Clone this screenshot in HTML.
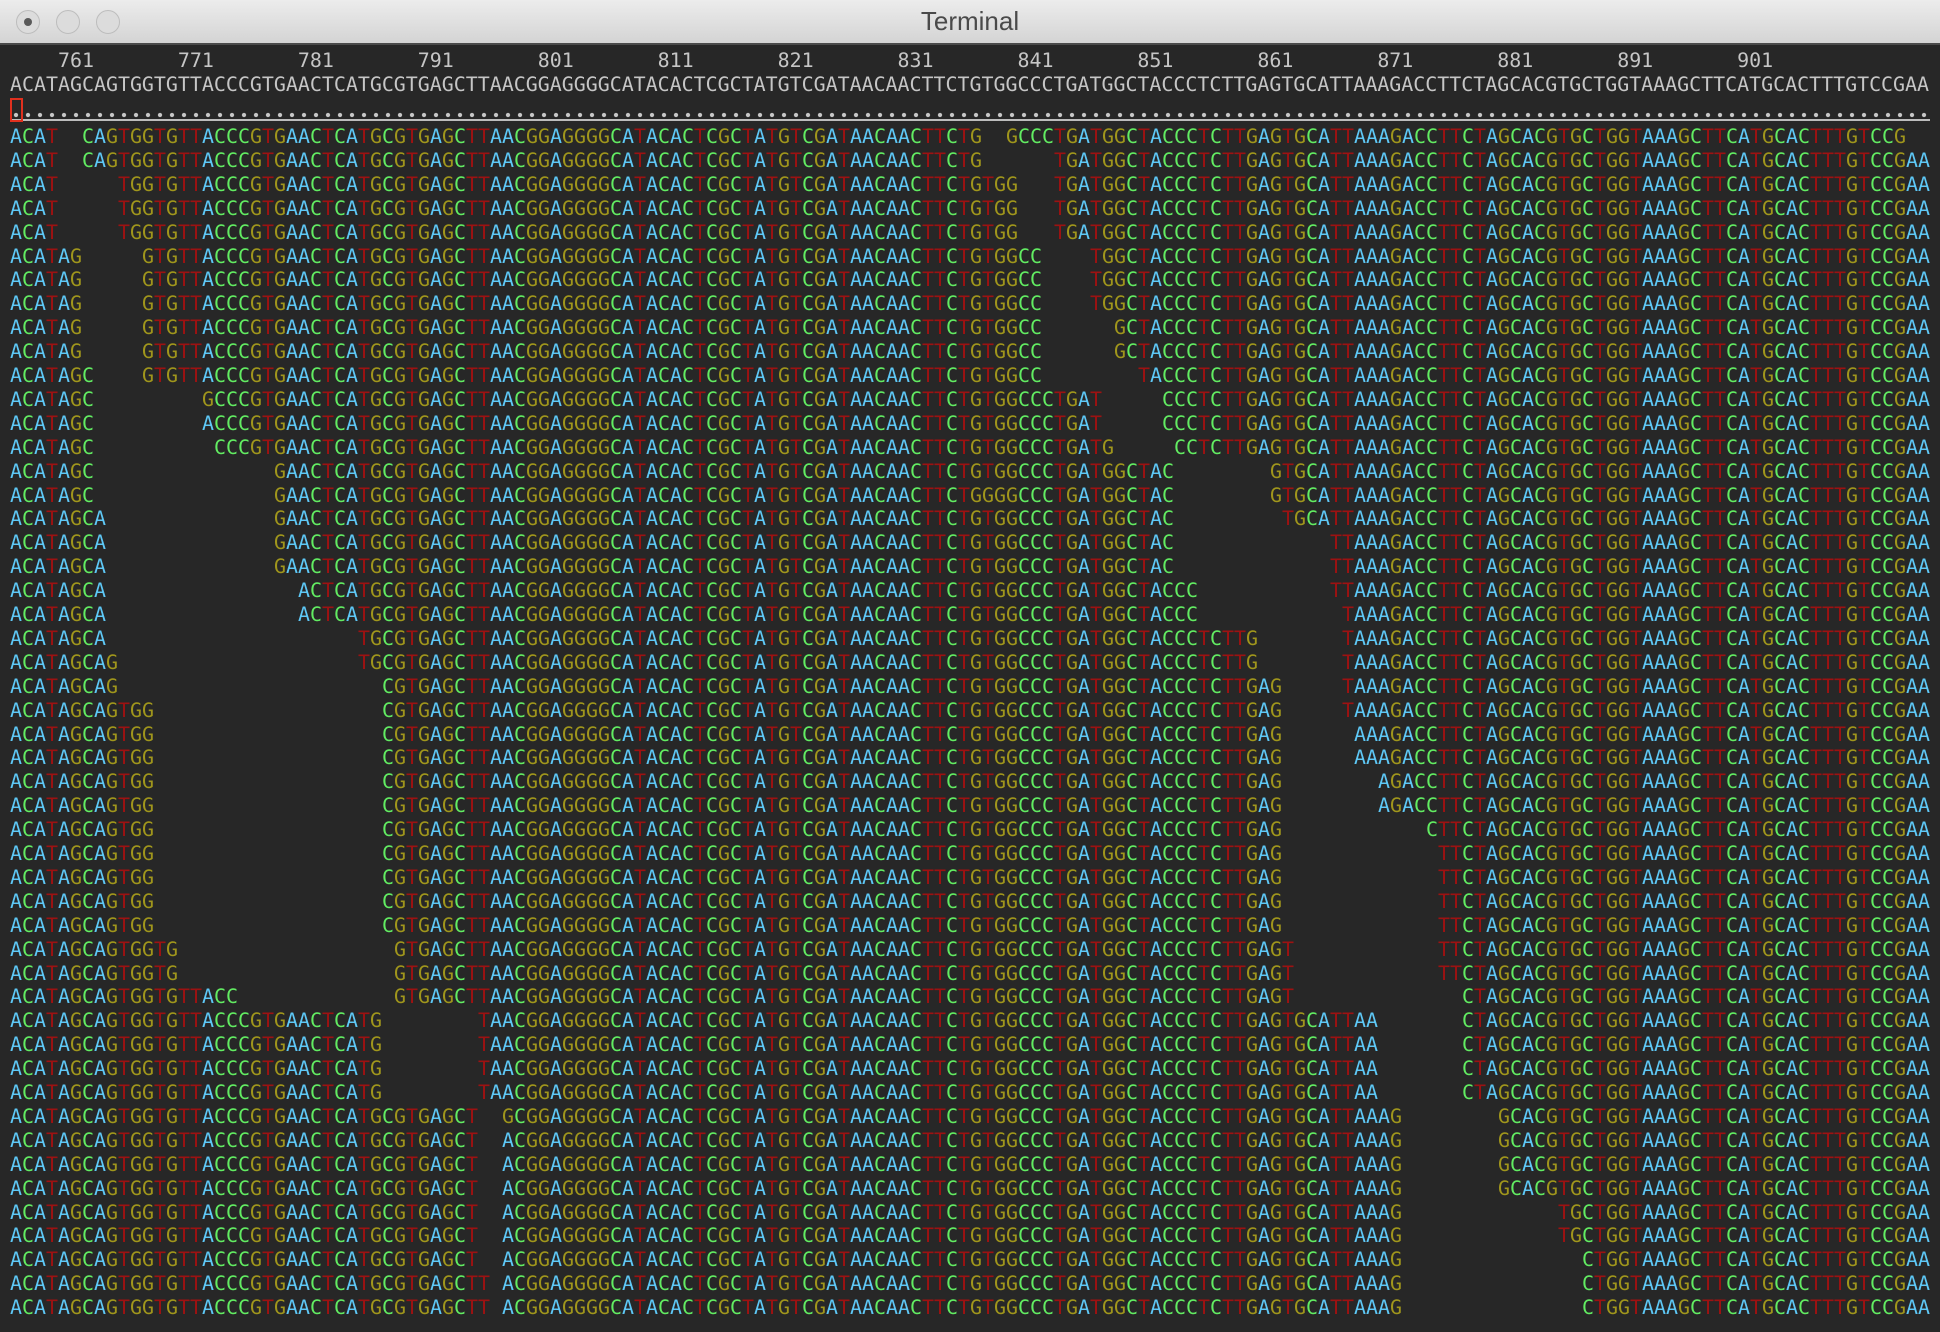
<!DOCTYPE html>
<html><head><meta charset="utf-8">
<style>
html,body{margin:0;padding:0;}
body{width:1940px;height:1332px;background:#272727;overflow:hidden;position:relative;font-family:"DejaVu Sans Mono","Liberation Mono",monospace;}
#bar{position:absolute;left:0;top:0;width:1940px;height:43px;background:linear-gradient(#ececec,#d4d4d4);border-bottom:2px solid #4a4a4a;}
#bar .t{position:absolute;left:0;width:1940px;top:6px;text-align:center;font-family:"Liberation Sans",sans-serif;font-size:26px;color:#4a4a4a;}
.dot{position:absolute;top:10px;width:22px;height:22px;border-radius:50%;background:#dcdcdc;border:1px solid #bdbdbd;}
.dot i{position:absolute;left:7px;top:7px;width:8px;height:8px;border-radius:50%;background:#5a5a5a;}
.ln{position:absolute;left:0;height:24px;line-height:24px;font-size:19.93px;white-space:pre;}
.hd{color:#c6c6c6;left:10px;}
#dots{position:absolute;left:10px;top:112px;width:1920px;height:6px;background:radial-gradient(circle at 6px 3px,#c8c8c8 0,#c8c8c8 1.8px,transparent 2.4px);background-size:12px 6px;}
#sep{position:absolute;left:10px;top:119px;width:1920px;height:2px;background:#bdbdbd;}
#cur{position:absolute;left:10px;top:98px;width:9px;height:20px;border:2px solid #e0301e;}
.A{color:#5ec8f6}.C{color:#62ec62}.G{color:#a0961c}.T{color:#9c1212}
</style></head><body>
<div id="bar"><div class="dot" style="left:16px"><i></i></div><div class="dot" style="left:56px"></div><div class="dot" style="left:96px"></div><div class="t">Terminal</div></div>
<div class="ln hd" style="top:49px">    761       771       781       791       801       811       821       831       841       851       861       871       881       891       901</div>
<div class="ln hd" style="top:73px">ACATAGCAGTGGTGTTACCCGTGAACTCATGCGTGAGCTTAACGGAGGGGCATACACTCGCTATGTCGATAACAACTTCTGTGGCCCTGATGGCTACCCTCTTGAGTGCATTAAAGACCTTCTAGCACGTGCTGGTAAAGCTTCATGCACTTTGTCCGAA</div>
<div id="dots"></div>
<div id="sep"></div><div id="cur"></div>
<div id="rows">
<div class="r"><b c="0">ACAT</b><b c="6">CAGTGGTGTTACCCGTGAACTCATGCGTGAGCTTAACGGAGGGGCATACACTCGCTATGTCGATAACAACTTCTG</b><b c="83">GCCCTGATGGCTACCCTCTTGAGTGCATTAAAGACCTTCTAGCACGTGCTGGTAAAGCTTCATGCACTTTGTCCG</b></div>
<div class="r"><b c="0">ACAT</b><b c="6">CAGTGGTGTTACCCGTGAACTCATGCGTGAGCTTAACGGAGGGGCATACACTCGCTATGTCGATAACAACTTCTG</b><b c="87">TGATGGCTACCCTCTTGAGTGCATTAAAGACCTTCTAGCACGTGCTGGTAAAGCTTCATGCACTTTGTCCGAA</b></div>
<div class="r"><b c="0">ACAT</b><b c="9">TGGTGTTACCCGTGAACTCATGCGTGAGCTTAACGGAGGGGCATACACTCGCTATGTCGATAACAACTTCTGTGG</b><b c="87">TGATGGCTACCCTCTTGAGTGCATTAAAGACCTTCTAGCACGTGCTGGTAAAGCTTCATGCACTTTGTCCGAA</b></div>
<div class="r"><b c="0">ACAT</b><b c="9">TGGTGTTACCCGTGAACTCATGCGTGAGCTTAACGGAGGGGCATACACTCGCTATGTCGATAACAACTTCTGTGG</b><b c="87">TGATGGCTACCCTCTTGAGTGCATTAAAGACCTTCTAGCACGTGCTGGTAAAGCTTCATGCACTTTGTCCGAA</b></div>
<div class="r"><b c="0">ACAT</b><b c="9">TGGTGTTACCCGTGAACTCATGCGTGAGCTTAACGGAGGGGCATACACTCGCTATGTCGATAACAACTTCTGTGG</b><b c="87">TGATGGCTACCCTCTTGAGTGCATTAAAGACCTTCTAGCACGTGCTGGTAAAGCTTCATGCACTTTGTCCGAA</b></div>
<div class="r"><b c="0">ACATAG</b><b c="11">GTGTTACCCGTGAACTCATGCGTGAGCTTAACGGAGGGGCATACACTCGCTATGTCGATAACAACTTCTGTGGCC</b><b c="90">TGGCTACCCTCTTGAGTGCATTAAAGACCTTCTAGCACGTGCTGGTAAAGCTTCATGCACTTTGTCCGAA</b></div>
<div class="r"><b c="0">ACATAG</b><b c="11">GTGTTACCCGTGAACTCATGCGTGAGCTTAACGGAGGGGCATACACTCGCTATGTCGATAACAACTTCTGTGGCC</b><b c="90">TGGCTACCCTCTTGAGTGCATTAAAGACCTTCTAGCACGTGCTGGTAAAGCTTCATGCACTTTGTCCGAA</b></div>
<div class="r"><b c="0">ACATAG</b><b c="11">GTGTTACCCGTGAACTCATGCGTGAGCTTAACGGAGGGGCATACACTCGCTATGTCGATAACAACTTCTGTGGCC</b><b c="90">TGGCTACCCTCTTGAGTGCATTAAAGACCTTCTAGCACGTGCTGGTAAAGCTTCATGCACTTTGTCCGAA</b></div>
<div class="r"><b c="0">ACATAG</b><b c="11">GTGTTACCCGTGAACTCATGCGTGAGCTTAACGGAGGGGCATACACTCGCTATGTCGATAACAACTTCTGTGGCC</b><b c="92">GCTACCCTCTTGAGTGCATTAAAGACCTTCTAGCACGTGCTGGTAAAGCTTCATGCACTTTGTCCGAA</b></div>
<div class="r"><b c="0">ACATAG</b><b c="11">GTGTTACCCGTGAACTCATGCGTGAGCTTAACGGAGGGGCATACACTCGCTATGTCGATAACAACTTCTGTGGCC</b><b c="92">GCTACCCTCTTGAGTGCATTAAAGACCTTCTAGCACGTGCTGGTAAAGCTTCATGCACTTTGTCCGAA</b></div>
<div class="r"><b c="0">ACATAGC</b><b c="11">GTGTTACCCGTGAACTCATGCGTGAGCTTAACGGAGGGGCATACACTCGCTATGTCGATAACAACTTCTGTGGCC</b><b c="94">TACCCTCTTGAGTGCATTAAAGACCTTCTAGCACGTGCTGGTAAAGCTTCATGCACTTTGTCCGAA</b></div>
<div class="r"><b c="0">ACATAGC</b><b c="16">GCCCGTGAACTCATGCGTGAGCTTAACGGAGGGGCATACACTCGCTATGTCGATAACAACTTCTGTGGCCCTGAT</b><b c="96">CCCTCTTGAGTGCATTAAAGACCTTCTAGCACGTGCTGGTAAAGCTTCATGCACTTTGTCCGAA</b></div>
<div class="r"><b c="0">ACATAGC</b><b c="16">ACCCGTGAACTCATGCGTGAGCTTAACGGAGGGGCATACACTCGCTATGTCGATAACAACTTCTGTGGCCCTGAT</b><b c="96">CCCTCTTGAGTGCATTAAAGACCTTCTAGCACGTGCTGGTAAAGCTTCATGCACTTTGTCCGAA</b></div>
<div class="r"><b c="0">ACATAGC</b><b c="17">CCCGTGAACTCATGCGTGAGCTTAACGGAGGGGCATACACTCGCTATGTCGATAACAACTTCTGTGGCCCTGATG</b><b c="97">CCTCTTGAGTGCATTAAAGACCTTCTAGCACGTGCTGGTAAAGCTTCATGCACTTTGTCCGAA</b></div>
<div class="r"><b c="0">ACATAGC</b><b c="22">GAACTCATGCGTGAGCTTAACGGAGGGGCATACACTCGCTATGTCGATAACAACTTCTGTGGCCCTGATGGCTAC</b><b c="105">GTGCATTAAAGACCTTCTAGCACGTGCTGGTAAAGCTTCATGCACTTTGTCCGAA</b></div>
<div class="r"><b c="0">ACATAGC</b><b c="22">GAACTCATGCGTGAGCTTAACGGAGGGGCATACACTCGCTATGTCGATAACAACTTCTGGGGCCCTGATGGCTAC</b><b c="105">GTGCATTAAAGACCTTCTAGCACGTGCTGGTAAAGCTTCATGCACTTTGTCCGAA</b></div>
<div class="r"><b c="0">ACATAGCA</b><b c="22">GAACTCATGCGTGAGCTTAACGGAGGGGCATACACTCGCTATGTCGATAACAACTTCTGTGGCCCTGATGGCTAC</b><b c="106">TGCATTAAAGACCTTCTAGCACGTGCTGGTAAAGCTTCATGCACTTTGTCCGAA</b></div>
<div class="r"><b c="0">ACATAGCA</b><b c="22">GAACTCATGCGTGAGCTTAACGGAGGGGCATACACTCGCTATGTCGATAACAACTTCTGTGGCCCTGATGGCTAC</b><b c="110">TTAAAGACCTTCTAGCACGTGCTGGTAAAGCTTCATGCACTTTGTCCGAA</b></div>
<div class="r"><b c="0">ACATAGCA</b><b c="22">GAACTCATGCGTGAGCTTAACGGAGGGGCATACACTCGCTATGTCGATAACAACTTCTGTGGCCCTGATGGCTAC</b><b c="110">TTAAAGACCTTCTAGCACGTGCTGGTAAAGCTTCATGCACTTTGTCCGAA</b></div>
<div class="r"><b c="0">ACATAGCA</b><b c="24">ACTCATGCGTGAGCTTAACGGAGGGGCATACACTCGCTATGTCGATAACAACTTCTGTGGCCCTGATGGCTACCC</b><b c="110">TTAAAGACCTTCTAGCACGTGCTGGTAAAGCTTCATGCACTTTGTCCGAA</b></div>
<div class="r"><b c="0">ACATAGCA</b><b c="24">ACTCATGCGTGAGCTTAACGGAGGGGCATACACTCGCTATGTCGATAACAACTTCTGTGGCCCTGATGGCTACCC</b><b c="111">TAAAGACCTTCTAGCACGTGCTGGTAAAGCTTCATGCACTTTGTCCGAA</b></div>
<div class="r"><b c="0">ACATAGCA</b><b c="29">TGCGTGAGCTTAACGGAGGGGCATACACTCGCTATGTCGATAACAACTTCTGTGGCCCTGATGGCTACCCTCTTG</b><b c="111">TAAAGACCTTCTAGCACGTGCTGGTAAAGCTTCATGCACTTTGTCCGAA</b></div>
<div class="r"><b c="0">ACATAGCAG</b><b c="29">TGCGTGAGCTTAACGGAGGGGCATACACTCGCTATGTCGATAACAACTTCTGTGGCCCTGATGGCTACCCTCTTG</b><b c="111">TAAAGACCTTCTAGCACGTGCTGGTAAAGCTTCATGCACTTTGTCCGAA</b></div>
<div class="r"><b c="0">ACATAGCAG</b><b c="31">CGTGAGCTTAACGGAGGGGCATACACTCGCTATGTCGATAACAACTTCTGTGGCCCTGATGGCTACCCTCTTGAG</b><b c="111">TAAAGACCTTCTAGCACGTGCTGGTAAAGCTTCATGCACTTTGTCCGAA</b></div>
<div class="r"><b c="0">ACATAGCAGTGG</b><b c="31">CGTGAGCTTAACGGAGGGGCATACACTCGCTATGTCGATAACAACTTCTGTGGCCCTGATGGCTACCCTCTTGAG</b><b c="111">TAAAGACCTTCTAGCACGTGCTGGTAAAGCTTCATGCACTTTGTCCGAA</b></div>
<div class="r"><b c="0">ACATAGCAGTGG</b><b c="31">CGTGAGCTTAACGGAGGGGCATACACTCGCTATGTCGATAACAACTTCTGTGGCCCTGATGGCTACCCTCTTGAG</b><b c="112">AAAGACCTTCTAGCACGTGCTGGTAAAGCTTCATGCACTTTGTCCGAA</b></div>
<div class="r"><b c="0">ACATAGCAGTGG</b><b c="31">CGTGAGCTTAACGGAGGGGCATACACTCGCTATGTCGATAACAACTTCTGTGGCCCTGATGGCTACCCTCTTGAG</b><b c="112">AAAGACCTTCTAGCACGTGCTGGTAAAGCTTCATGCACTTTGTCCGAA</b></div>
<div class="r"><b c="0">ACATAGCAGTGG</b><b c="31">CGTGAGCTTAACGGAGGGGCATACACTCGCTATGTCGATAACAACTTCTGTGGCCCTGATGGCTACCCTCTTGAG</b><b c="114">AGACCTTCTAGCACGTGCTGGTAAAGCTTCATGCACTTTGTCCGAA</b></div>
<div class="r"><b c="0">ACATAGCAGTGG</b><b c="31">CGTGAGCTTAACGGAGGGGCATACACTCGCTATGTCGATAACAACTTCTGTGGCCCTGATGGCTACCCTCTTGAG</b><b c="114">AGACCTTCTAGCACGTGCTGGTAAAGCTTCATGCACTTTGTCCGAA</b></div>
<div class="r"><b c="0">ACATAGCAGTGG</b><b c="31">CGTGAGCTTAACGGAGGGGCATACACTCGCTATGTCGATAACAACTTCTGTGGCCCTGATGGCTACCCTCTTGAG</b><b c="118">CTTCTAGCACGTGCTGGTAAAGCTTCATGCACTTTGTCCGAA</b></div>
<div class="r"><b c="0">ACATAGCAGTGG</b><b c="31">CGTGAGCTTAACGGAGGGGCATACACTCGCTATGTCGATAACAACTTCTGTGGCCCTGATGGCTACCCTCTTGAG</b><b c="119">TTCTAGCACGTGCTGGTAAAGCTTCATGCACTTTGTCCGAA</b></div>
<div class="r"><b c="0">ACATAGCAGTGG</b><b c="31">CGTGAGCTTAACGGAGGGGCATACACTCGCTATGTCGATAACAACTTCTGTGGCCCTGATGGCTACCCTCTTGAG</b><b c="119">TTCTAGCACGTGCTGGTAAAGCTTCATGCACTTTGTCCGAA</b></div>
<div class="r"><b c="0">ACATAGCAGTGG</b><b c="31">CGTGAGCTTAACGGAGGGGCATACACTCGCTATGTCGATAACAACTTCTGTGGCCCTGATGGCTACCCTCTTGAG</b><b c="119">TTCTAGCACGTGCTGGTAAAGCTTCATGCACTTTGTCCGAA</b></div>
<div class="r"><b c="0">ACATAGCAGTGG</b><b c="31">CGTGAGCTTAACGGAGGGGCATACACTCGCTATGTCGATAACAACTTCTGTGGCCCTGATGGCTACCCTCTTGAG</b><b c="119">TTCTAGCACGTGCTGGTAAAGCTTCATGCACTTTGTCCGAA</b></div>
<div class="r"><b c="0">ACATAGCAGTGGTG</b><b c="32">GTGAGCTTAACGGAGGGGCATACACTCGCTATGTCGATAACAACTTCTGTGGCCCTGATGGCTACCCTCTTGAGT</b><b c="119">TTCTAGCACGTGCTGGTAAAGCTTCATGCACTTTGTCCGAA</b></div>
<div class="r"><b c="0">ACATAGCAGTGGTG</b><b c="32">GTGAGCTTAACGGAGGGGCATACACTCGCTATGTCGATAACAACTTCTGTGGCCCTGATGGCTACCCTCTTGAGT</b><b c="119">TTCTAGCACGTGCTGGTAAAGCTTCATGCACTTTGTCCGAA</b></div>
<div class="r"><b c="0">ACATAGCAGTGGTGTTACC</b><b c="32">GTGAGCTTAACGGAGGGGCATACACTCGCTATGTCGATAACAACTTCTGTGGCCCTGATGGCTACCCTCTTGAGT</b><b c="121">CTAGCACGTGCTGGTAAAGCTTCATGCACTTTGTCCGAA</b></div>
<div class="r"><b c="0">ACATAGCAGTGGTGTTACCCGTGAACTCATG</b><b c="39">TAACGGAGGGGCATACACTCGCTATGTCGATAACAACTTCTGTGGCCCTGATGGCTACCCTCTTGAGTGCATTAA</b><b c="121">CTAGCACGTGCTGGTAAAGCTTCATGCACTTTGTCCGAA</b></div>
<div class="r"><b c="0">ACATAGCAGTGGTGTTACCCGTGAACTCATG</b><b c="39">TAACGGAGGGGCATACACTCGCTATGTCGATAACAACTTCTGTGGCCCTGATGGCTACCCTCTTGAGTGCATTAA</b><b c="121">CTAGCACGTGCTGGTAAAGCTTCATGCACTTTGTCCGAA</b></div>
<div class="r"><b c="0">ACATAGCAGTGGTGTTACCCGTGAACTCATG</b><b c="39">TAACGGAGGGGCATACACTCGCTATGTCGATAACAACTTCTGTGGCCCTGATGGCTACCCTCTTGAGTGCATTAA</b><b c="121">CTAGCACGTGCTGGTAAAGCTTCATGCACTTTGTCCGAA</b></div>
<div class="r"><b c="0">ACATAGCAGTGGTGTTACCCGTGAACTCATG</b><b c="39">TAACGGAGGGGCATACACTCGCTATGTCGATAACAACTTCTGTGGCCCTGATGGCTACCCTCTTGAGTGCATTAA</b><b c="121">CTAGCACGTGCTGGTAAAGCTTCATGCACTTTGTCCGAA</b></div>
<div class="r"><b c="0">ACATAGCAGTGGTGTTACCCGTGAACTCATGCGTGAGCT</b><b c="41">GCGGAGGGGCATACACTCGCTATGTCGATAACAACTTCTGTGGCCCTGATGGCTACCCTCTTGAGTGCATTAAAG</b><b c="124">GCACGTGCTGGTAAAGCTTCATGCACTTTGTCCGAA</b></div>
<div class="r"><b c="0">ACATAGCAGTGGTGTTACCCGTGAACTCATGCGTGAGCT</b><b c="41">ACGGAGGGGCATACACTCGCTATGTCGATAACAACTTCTGTGGCCCTGATGGCTACCCTCTTGAGTGCATTAAAG</b><b c="124">GCACGTGCTGGTAAAGCTTCATGCACTTTGTCCGAA</b></div>
<div class="r"><b c="0">ACATAGCAGTGGTGTTACCCGTGAACTCATGCGTGAGCT</b><b c="41">ACGGAGGGGCATACACTCGCTATGTCGATAACAACTTCTGTGGCCCTGATGGCTACCCTCTTGAGTGCATTAAAG</b><b c="124">GCACGTGCTGGTAAAGCTTCATGCACTTTGTCCGAA</b></div>
<div class="r"><b c="0">ACATAGCAGTGGTGTTACCCGTGAACTCATGCGTGAGCT</b><b c="41">ACGGAGGGGCATACACTCGCTATGTCGATAACAACTTCTGTGGCCCTGATGGCTACCCTCTTGAGTGCATTAAAG</b><b c="124">GCACGTGCTGGTAAAGCTTCATGCACTTTGTCCGAA</b></div>
<div class="r"><b c="0">ACATAGCAGTGGTGTTACCCGTGAACTCATGCGTGAGCT</b><b c="41">ACGGAGGGGCATACACTCGCTATGTCGATAACAACTTCTGTGGCCCTGATGGCTACCCTCTTGAGTGCATTAAAG</b><b c="129">TGCTGGTAAAGCTTCATGCACTTTGTCCGAA</b></div>
<div class="r"><b c="0">ACATAGCAGTGGTGTTACCCGTGAACTCATGCGTGAGCT</b><b c="41">ACGGAGGGGCATACACTCGCTATGTCGATAACAACTTCTGTGGCCCTGATGGCTACCCTCTTGAGTGCATTAAAG</b><b c="129">TGCTGGTAAAGCTTCATGCACTTTGTCCGAA</b></div>
<div class="r"><b c="0">ACATAGCAGTGGTGTTACCCGTGAACTCATGCGTGAGCT</b><b c="41">ACGGAGGGGCATACACTCGCTATGTCGATAACAACTTCTGTGGCCCTGATGGCTACCCTCTTGAGTGCATTAAAG</b><b c="131">CTGGTAAAGCTTCATGCACTTTGTCCGAA</b></div>
<div class="r"><b c="0">ACATAGCAGTGGTGTTACCCGTGAACTCATGCGTGAGCTT</b><b c="41">ACGGAGGGGCATACACTCGCTATGTCGATAACAACTTCTGTGGCCCTGATGGCTACCCTCTTGAGTGCATTAAAG</b><b c="131">CTGGTAAAGCTTCATGCACTTTGTCCGAA</b></div>
<div class="r"><b c="0">ACATAGCAGTGGTGTTACCCGTGAACTCATGCGTGAGCTT</b><b c="41">ACGGAGGGGCATACACTCGCTATGTCGATAACAACTTCTGTGGCCCTGATGGCTACCCTCTTGAGTGCATTAAAG</b><b c="131">CTGGTAAAGCTTCATGCACTTTGTCCGAA</b></div>
</div>
<script>
(function(){
  var rows=document.querySelectorAll('#rows .r');
  for(var i=0;i<rows.length;i++){
    var r=rows[i];
    r.className='ln';
    r.style.top=(125+i*23.9)+'px';
    r.style.width='1940px';
    var segs=r.querySelectorAll('b');
    for(var j=0;j<segs.length;j++){
      var b=segs[j];
      var c=parseInt(b.getAttribute('c'),10);
      var txt=b.textContent, h='';
      for(var k=0;k<txt.length;k++){
        h+='<span class="'+txt[k]+'" style="position:absolute;left:'+(10+12*(c+k))+'px">'+txt[k]+'</span>';
      }
      var d=document.createElement('span');
      d.innerHTML=h;
      b.parentNode.replaceChild(d,b);
    }
  }
})();
</script>
</body></html>
